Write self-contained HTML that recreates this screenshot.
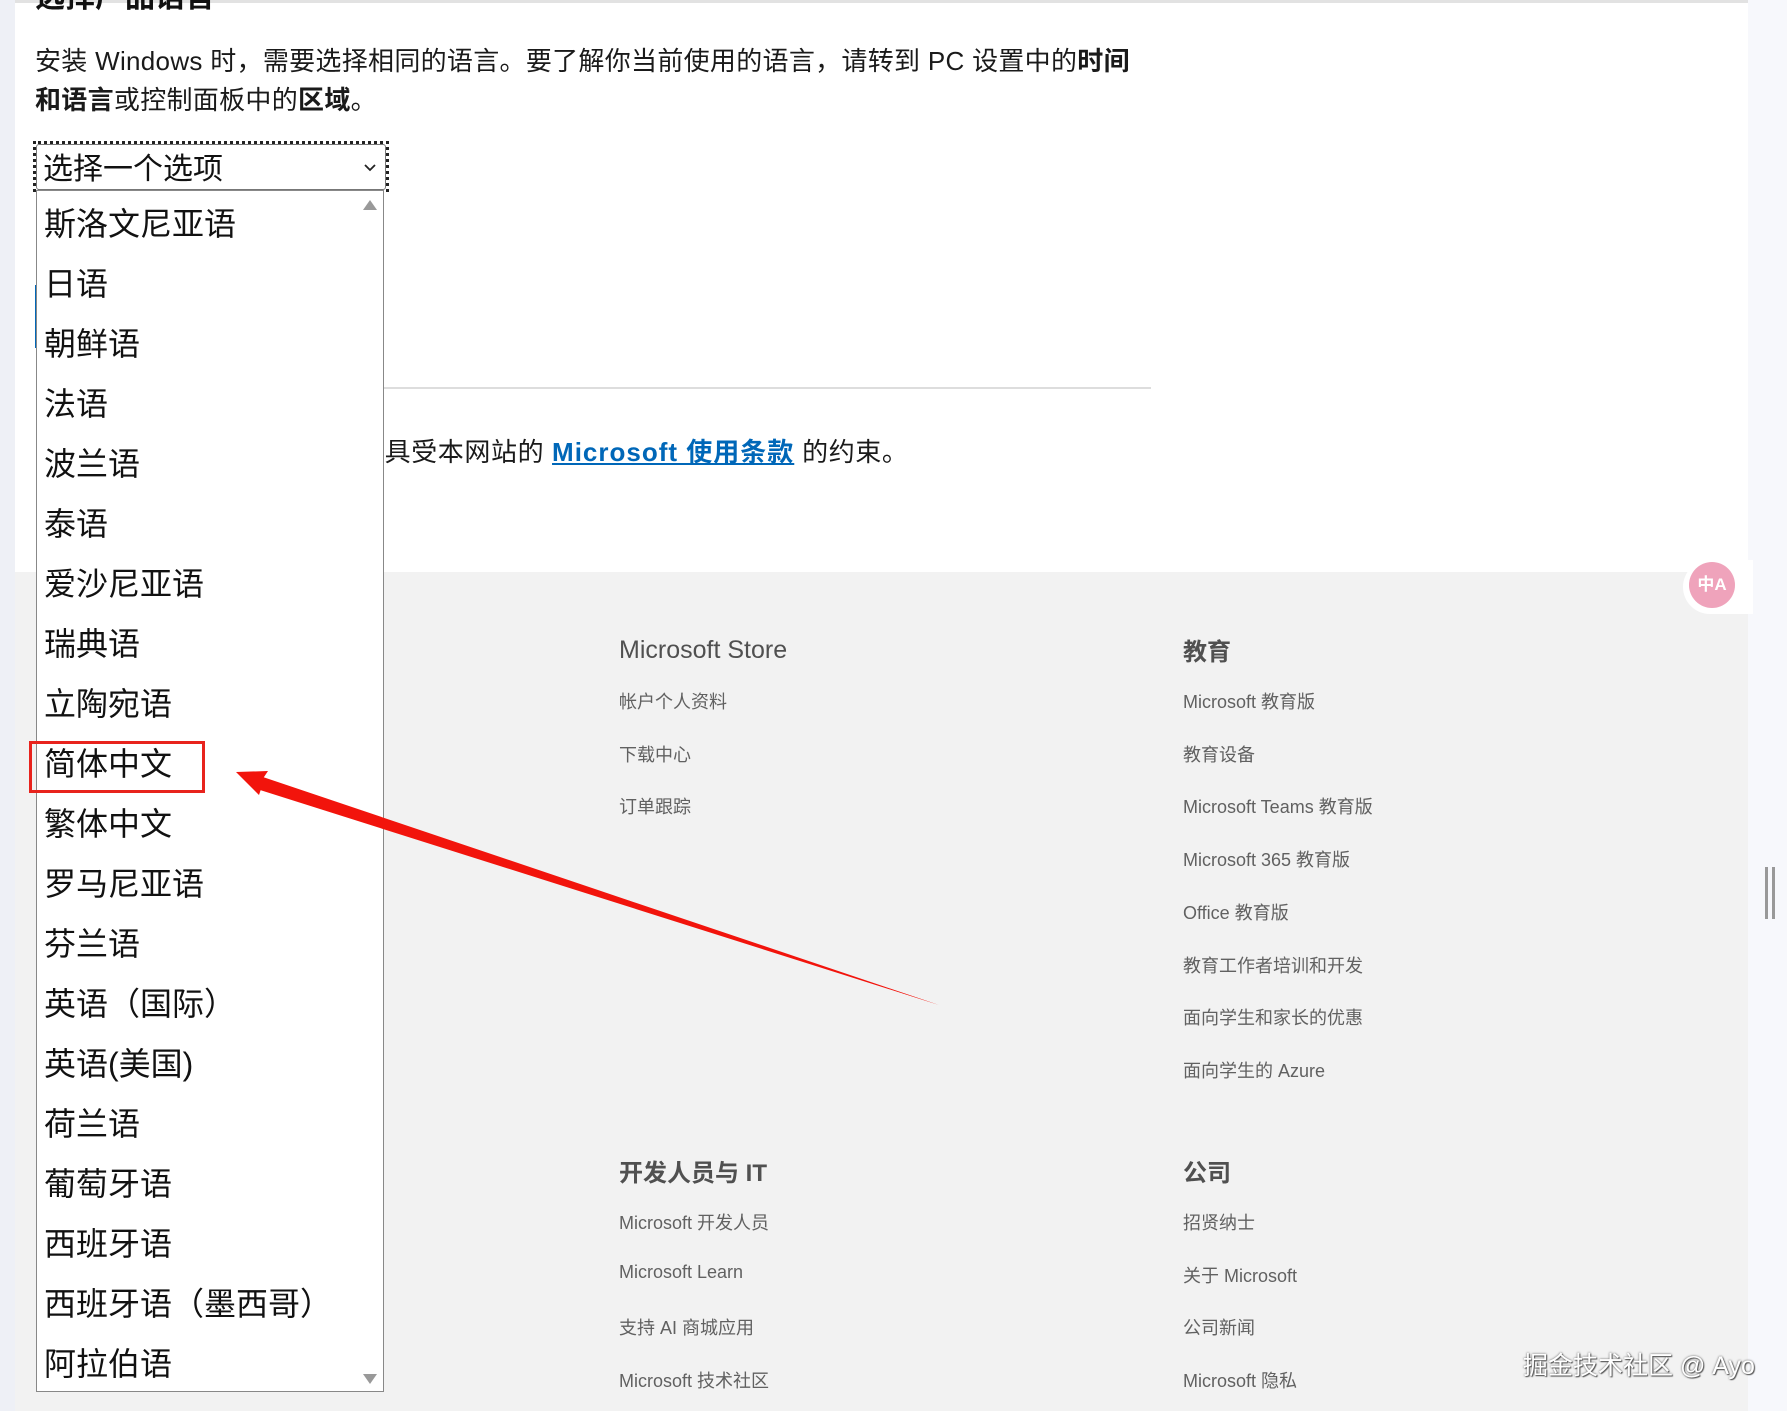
<!DOCTYPE html>
<html><head><meta charset="utf-8"><style>
*{margin:0;padding:0;box-sizing:border-box}
body{width:1787px;height:1411px;position:relative;overflow:hidden;background:#fff;font-family:"Liberation Sans","Noto Sans CJK SC",sans-serif;color:#111}
.abs{position:absolute;white-space:nowrap}
#lstrip{left:0;top:0;width:15px;height:1411px;background:#eef0f6}
#rstrip{left:1748px;top:0;width:39px;height:1411px;background:#f7f8fc}
#topline{left:15px;top:0;width:1733px;height:3px;background:#e2e2e2}
#foot{left:15px;top:572px;width:1733px;height:839px;background:#f2f2f2}
.p{font-size:26px;left:35px;color:#1a1a1a;letter-spacing:0.3px}
b{font-weight:bold}
#sel{left:33px;top:141px;width:356px;height:51px;border:3px dotted #222}
#selin{left:36px;top:144px;width:350px;height:46px;border:1px solid #777;border-radius:3px;background:#fff;font-size:30px;line-height:50px;padding-left:6px}
#list{left:36px;top:190px;width:348px;height:1202px;border:1px solid #888;background:#fff}
.it{position:absolute;left:7px;font-size:32px;line-height:40px;color:#111}
.h{font-size:24px;color:#505050;font-weight:bold}
.l{font-size:18px;color:#616161}
</style></head><body>
<div class="abs" id="lstrip"></div>
<div class="abs" id="rstrip"></div>
<div class="abs" id="foot"></div>
<div class="abs" id="topline"></div>
<div class="abs" style="left:35px;top:-28px;font-size:30px;font-weight:bold">选择产品语言</div>
<div class="abs p" style="top:41px">安装 Windows 时，需要选择相同的语言。要了解你当前使用的语言，请转到 PC 设置中的<b>时间</b></div>
<div class="abs p" style="top:80px"><b>和语言</b>或控制面板中的<b>区域</b>。</div>
<div class="abs" style="left:383px;top:387px;width:768px;height:2px;background:#ddd"></div>
<div class="abs" style="left:358px;top:432px;font-size:26px;color:#1a1a1a;letter-spacing:0.6px">工具受本网站的 <a style="color:#0067b8;font-weight:bold;text-decoration:underline;letter-spacing:1px">Microsoft 使用条款</a> 的约束。</div>
<div class="abs" style="left:35px;top:285px;width:3px;height:63px;background:#0067b8"></div>

<div class="abs h" style="left:619px;top:636px;font-weight:normal;font-size:25px">Microsoft Store</div>
<div class="abs l" style="left:619px;top:688px">帐户个人资料</div>
<div class="abs l" style="left:619px;top:741px">下载中心</div>
<div class="abs l" style="left:619px;top:793px">订单跟踪</div>
<div class="abs h" style="left:619px;top:1153px">开发人员与 IT</div>
<div class="abs l" style="left:619px;top:1209px">Microsoft 开发人员</div>
<div class="abs l" style="left:619px;top:1262px">Microsoft Learn</div>
<div class="abs l" style="left:619px;top:1314px">支持 AI 商城应用</div>
<div class="abs l" style="left:619px;top:1367px">Microsoft 技术社区</div>

<div class="abs h" style="left:1183px;top:632px">教育</div>
<div class="abs l" style="left:1183px;top:688px">Microsoft 教育版</div>
<div class="abs l" style="left:1183px;top:741px">教育设备</div>
<div class="abs l" style="left:1183px;top:793px">Microsoft Teams 教育版</div>
<div class="abs l" style="left:1183px;top:846px">Microsoft 365 教育版</div>
<div class="abs l" style="left:1183px;top:899px">Office 教育版</div>
<div class="abs l" style="left:1183px;top:952px">教育工作者培训和开发</div>
<div class="abs l" style="left:1183px;top:1004px">面向学生和家长的优惠</div>
<div class="abs l" style="left:1183px;top:1057px">面向学生的 Azure</div>
<div class="abs h" style="left:1183px;top:1153px">公司</div>
<div class="abs l" style="left:1183px;top:1209px">招贤纳士</div>
<div class="abs l" style="left:1183px;top:1262px">关于 Microsoft</div>
<div class="abs l" style="left:1183px;top:1314px">公司新闻</div>
<div class="abs l" style="left:1183px;top:1367px">Microsoft 隐私</div>

<div class="abs" id="sel"></div>
<div class="abs" id="selin">选择一个选项<svg style="position:absolute;right:8px;top:18px" width="14" height="10" viewBox="0 0 14 10"><path d="M2 2 L7 7 L12 2" stroke="#222" stroke-width="1.8" fill="none"/></svg></div>
<div class="abs" id="list">
<svg style="position:absolute;right:5px;top:8px" width="16" height="12"><path d="M1 11 L8 1 L15 11Z" fill="#999"/></svg>
<svg style="position:absolute;right:5px;bottom:6px" width="16" height="12"><path d="M1 1 L8 11 L15 1Z" fill="#999"/></svg>
<div class="it" style="top:13px">斯洛文尼亚语</div>
<div class="it" style="top:73px">日语</div>
<div class="it" style="top:133px">朝鲜语</div>
<div class="it" style="top:193px">法语</div>
<div class="it" style="top:253px">波兰语</div>
<div class="it" style="top:313px">泰语</div>
<div class="it" style="top:373px">爱沙尼亚语</div>
<div class="it" style="top:433px">瑞典语</div>
<div class="it" style="top:493px">立陶宛语</div>
<div class="it" style="top:553px">简体中文</div>
<div class="it" style="top:613px">繁体中文</div>
<div class="it" style="top:673px">罗马尼亚语</div>
<div class="it" style="top:733px">芬兰语</div>
<div class="it" style="top:793px">英语（国际）</div>
<div class="it" style="top:853px">英语(美国)</div>
<div class="it" style="top:913px">荷兰语</div>
<div class="it" style="top:973px">葡萄牙语</div>
<div class="it" style="top:1033px">西班牙语</div>
<div class="it" style="top:1093px">西班牙语（墨西哥）</div>
<div class="it" style="top:1153px">阿拉伯语</div>
</div>
<div class="abs" style="left:29px;top:741px;width:176px;height:52px;border:3px solid #e8231d"></div>
<svg class="abs" style="left:0;top:0" width="1787" height="1411">
<path d="M939 1005 L262 780 L268 771 L236 772 L259 795 L262 786 Z" fill="#f2140c"/>
<path d="M939 1005 L254 774 L260 790 Z" fill="#f2140c"/>
</svg>
<div class="abs" style="left:1683px;top:560px;width:70px;height:54px;background:#fff;border-radius:27px 0 0 27px"></div>
<div class="abs" style="left:1689px;top:562px;width:46px;height:46px;border-radius:50%;background:#efa3bb;color:#fff;font-size:17px;font-weight:bold;line-height:46px;text-align:center">中A</div>
<div class="abs" style="left:1765px;top:867px;width:3px;height:52px;background:#999"></div>
<div class="abs" style="left:1772px;top:867px;width:3px;height:52px;background:#999"></div>
<div class="abs" style="left:1523px;top:1346px;font-size:25px;color:#fff;text-shadow:0 0 2px #555,1px 1px 1px #555">掘金技术社区 @ Ayo</div>
</body></html>
